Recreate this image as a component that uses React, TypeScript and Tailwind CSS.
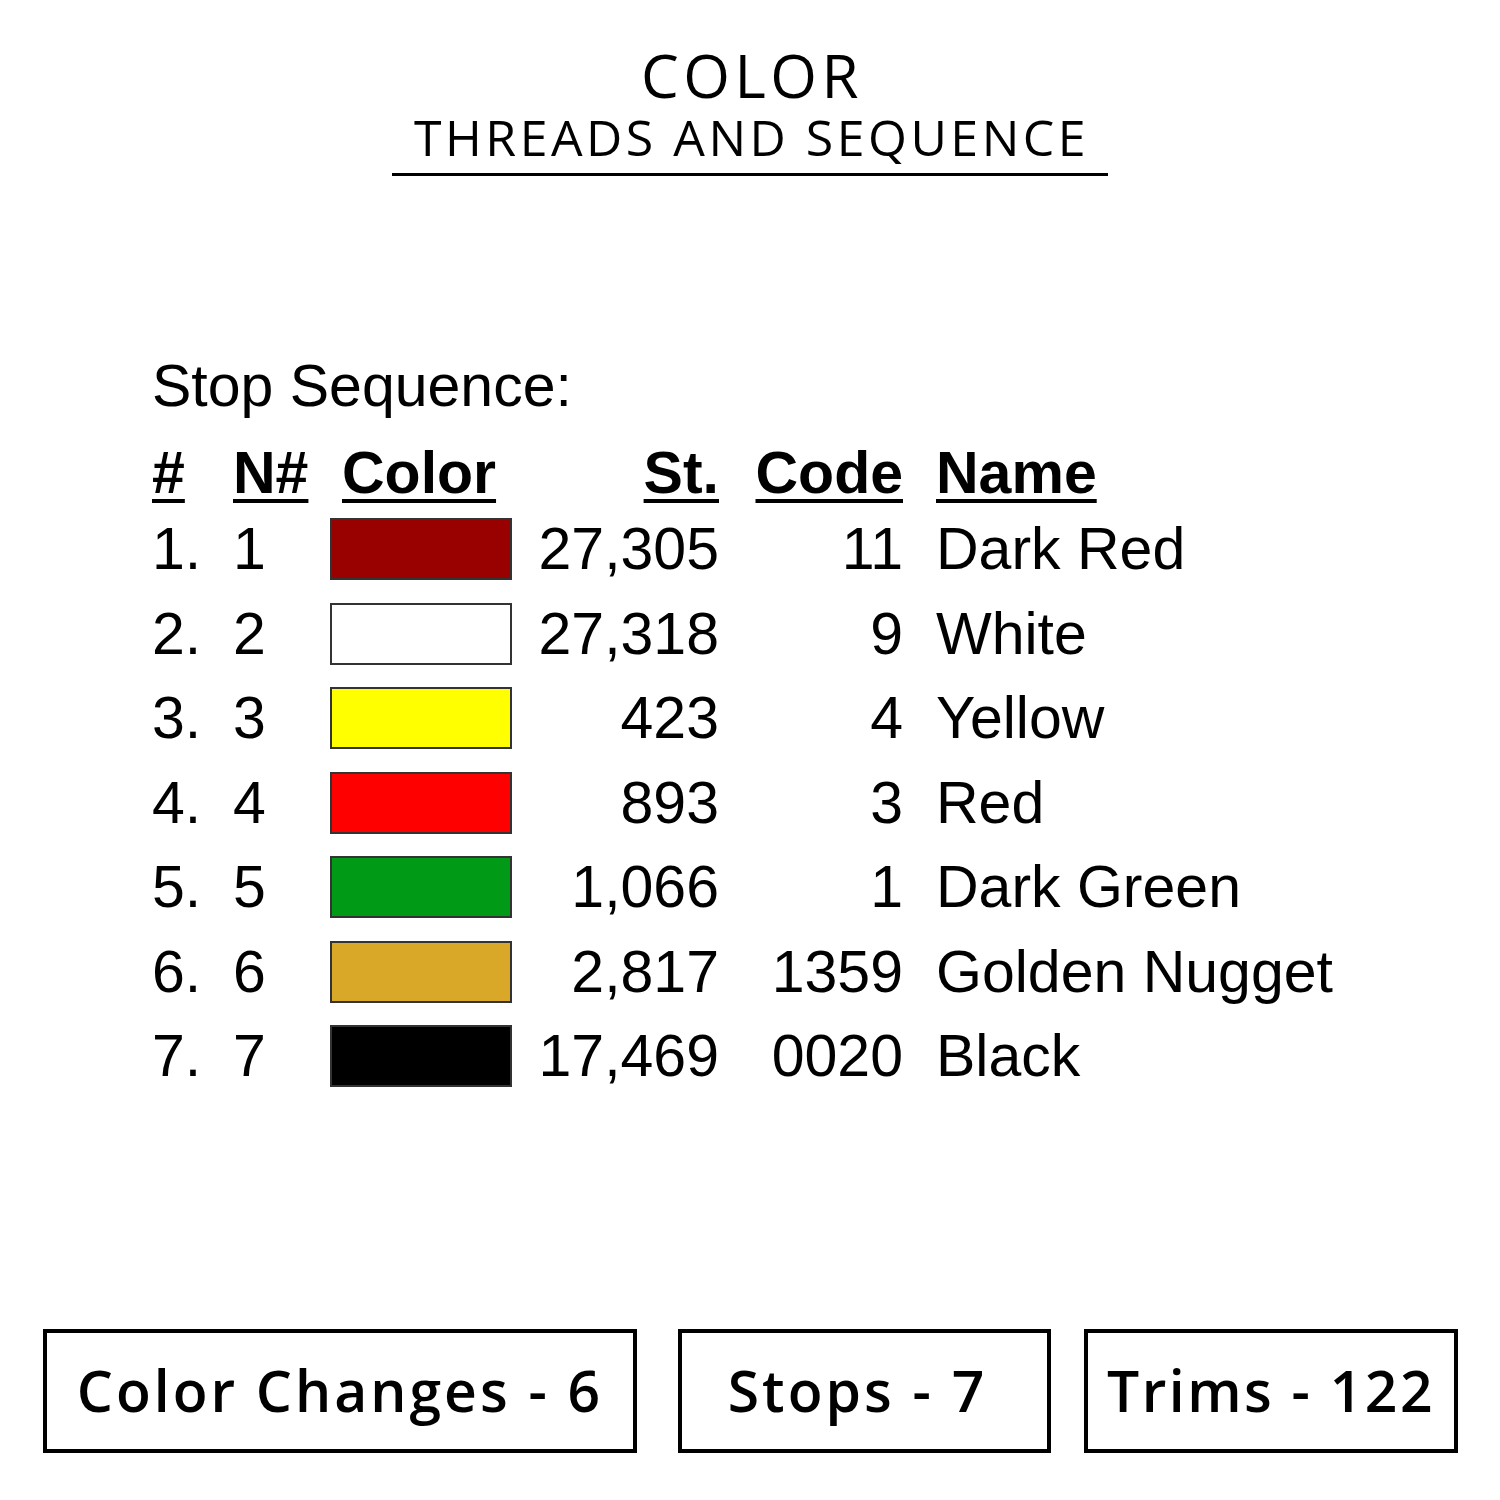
import React from "react";

const rows = [
  { n: "1.", k: "1", color: "#990000", st: "27,305", code: "11", name: "Dark Red" },
  { n: "2.", k: "2", color: "#ffffff", st: "27,318", code: "9", name: "White" },
  { n: "3.", k: "3", color: "#ffff00", st: "423", code: "4", name: "Yellow" },
  { n: "4.", k: "4", color: "#ff0000", st: "893", code: "3", name: "Red" },
  { n: "5.", k: "5", color: "#009a16", st: "1,066", code: "1", name: "Dark Green" },
  { n: "6.", k: "6", color: "#d9a829", st: "2,817", code: "1359", name: "Golden Nugget" },
  { n: "7.", k: "7", color: "#000000", st: "17,469", code: "0020", name: "Black" },
];

const arial = { fontFamily: '"Liberation Sans", Arial, sans-serif' };
const mont = { fontFamily: '"Open Sans", Lato, sans-serif' };

export default function App() {
  return (
    <div className="w-[1500px] h-[1500px] bg-white text-black flex flex-col">
      {/* Title */}
      <div className="flex flex-col items-center pt-[43px]" style={mont}>
        <div className="text-[60px] leading-[64px] font-medium tracking-[4.5px] pl-[4px]">COLOR</div>
        <div className="text-[50px] leading-[56px] font-normal mt-[2px] tracking-[3.5px] pl-[3px]">THREADS AND SEQUENCE</div>
        <div className="w-[716px] h-[3px] bg-black mt-[8px]" />
      </div>

      {/* Table */}
      <div className="pl-[152px] mt-[180px] text-[59px]" style={arial}>
        <div className="leading-[60px] h-[60px]">Stop Sequence:</div>
        <div className="grid grid-cols-[81px_97px_182px_207px_184px_auto] mt-[23px]">
          <div className="font-bold leading-[68px] underline decoration-[4px] underline-offset-[6px]">#</div>
          <div className="font-bold leading-[68px] underline decoration-[4px] underline-offset-[6px]">N#</div>
          <div className="font-bold leading-[68px] pl-[12px]"><span className="underline decoration-[4px] underline-offset-[6px]">Color</span></div>
          <div className="font-bold leading-[68px] text-right"><span className="underline decoration-[4px] underline-offset-[6px]">St.</span></div>
          <div className="font-bold leading-[68px] text-right"><span className="underline decoration-[4px] underline-offset-[6px]">Code</span></div>
          <div className="font-bold leading-[68px] pl-[33px]"><span className="underline decoration-[4px] underline-offset-[6px]">Name</span></div>
          {rows.map((r) => (
            <React.Fragment key={r.n}>
              <div className="h-[84.5px] flex items-center">{r.n}</div>
              <div className="h-[84.5px] flex items-center">{r.k}</div>
              <div className="h-[84.5px] flex items-center">
                <div className="w-[182px] h-[62px] border-2 border-[#333]" style={{ backgroundColor: r.color }} />
              </div>
              <div className="h-[84.5px] flex items-center justify-end">{r.st}</div>
              <div className="h-[84.5px] flex items-center justify-end">{r.code}</div>
              <div className="h-[84.5px] flex items-center pl-[33px] whitespace-nowrap">{r.name}</div>
            </React.Fragment>
          ))}
        </div>
      </div>

      {/* Bottom boxes */}
      <div className="mt-auto mb-[47px] flex pl-[43px]" style={mont}>
        <div className="w-[594px] h-[124px] border-[4px] border-black flex items-center justify-center text-[57px] font-semibold tracking-[3px]">Color Changes - 6</div>
        <div className="w-[373px] h-[124px] border-[4px] border-black flex items-center justify-center text-[57px] font-semibold tracking-[3px] ml-[41px] pr-[14px]">Stops - 7</div>
        <div className="w-[374px] h-[124px] border-[4px] border-black flex items-center justify-center text-[57px] font-semibold tracking-[2.5px] ml-[33px]">Trims - 122</div>
      </div>
    </div>
  );
}
